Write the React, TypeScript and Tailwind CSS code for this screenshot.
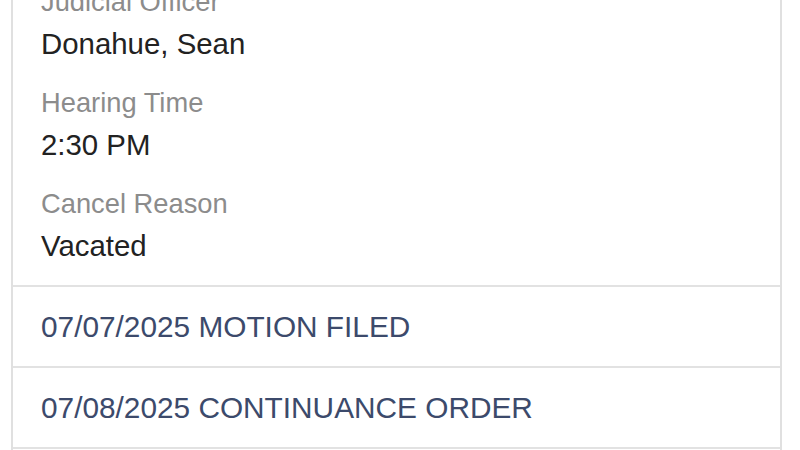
const details = [
  { label: 'Judicial Officer', value: 'Donahue, Sean' },
  { label: 'Hearing Time', value: '2:30 PM' },
  { label: 'Cancel Reason', value: 'Vacated' },
]

const events = ['07/07/2025 MOTION FILED', '07/08/2025 CONTINUANCE ORDER']

export default function App() {
  return (
    <div className="h-[450px] overflow-hidden bg-white font-['Liberation_Sans',Arial,sans-serif]">
      <div className="ml-[11px] w-[771px] border-x-2 border-[#e0e0e0] bg-white">
        <section className="-mt-[16px] flex flex-col gap-[23px] pb-[21px] pl-[28px]">
          {details.map((d) => (
            <div key={d.label}>
              <div className="text-[27.3px] leading-[36px] text-[#8c8c8c]">{d.label}</div>
              <div className="mt-[6px] text-[29.4px] leading-[36px] text-[#222222]">{d.value}</div>
            </div>
          ))}
        </section>
        {events.map((e) => (
          <div key={e} className="border-t-2 border-[#e2e2e2] pb-[21px] pl-[28px] pt-[22px]">
            <div className="text-[29.8px] leading-[36px] text-[#3c4a6b]">{e}</div>
          </div>
        ))}
        <div className="h-[40px] border-t-2 border-[#e2e2e2]" />
      </div>
    </div>
  )
}
